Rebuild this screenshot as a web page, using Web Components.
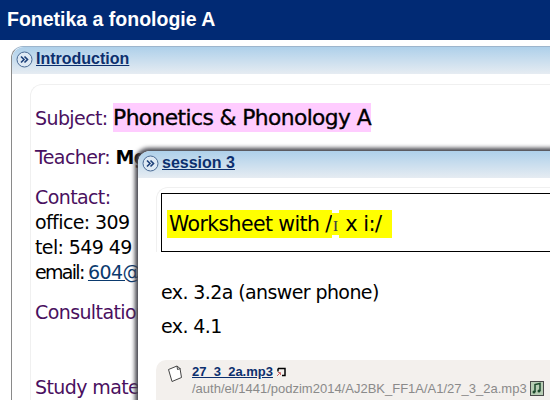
<!DOCTYPE html>
<html lang="en"><head><meta charset="utf-8"><title>Fonetika a fonologie A</title>
<style>
html,body{margin:0;padding:0;height:100%;overflow:hidden;background:#fff}
body{font-family:"Liberation Sans",Arial,sans-serif;width:550px;height:400px;position:relative}
</style></head><body>
<page-title>Fonetika a fonologie A</page-title>
<section-panel heading="Introduction" style="margin:6px 0 0 11px;width:700px;height:500px">
  <soft-box style="margin:10px 0 0 18px;padding:20px 0 0 4px">
    <comic-line mt="0"><purple-text>Subject:</purple-text> <hl-text color="#ffccff" size="21.800px" strong>Phonetics &amp; Phonology A</hl-text></comic-line>
    <comic-line mt="14"><purple-text>Teacher:</purple-text> <b>Mgr. </b></comic-line>
    <comic-line mt="15"><purple-text>Contact:</purple-text></comic-line>
    <comic-line mt="0">office: 309</comic-line>
    <comic-line mt="0">tel: 549 49</comic-line>
    <comic-line mt="0"><span style="letter-spacing:-1.700px">email: </span><a href="#" style="color:#0b3a6e">604@</a></comic-line>
    <comic-line mt="15"><purple-text>Consultation</purple-text></comic-line>
    <comic-line mt="50"><purple-text>Study mater</purple-text></comic-line>
  </soft-box>
</section-panel>
<float-window heading="session 3">
  <soft-box style="margin:9px 0 0 18px;padding:5px 0 0 4px">
    <bordered-box>
      <hl-text color="#ffff00" size="20.500px" pad="2px 0 2px 2px">Worksheet with /</hl-text><hl-text color="#ffff00" size="20px" serif pad="0 1px">ɪ</hl-text><hl-text color="#ffff00" size="21px" pad="2px 11px 2px 0"> x i:/</hl-text>
    </bordered-box>
  </soft-box>
  <comic-line mt="28" style="margin-left:23px">ex. 3.2a (answer phone)</comic-line>
  <comic-line mt="9" style="margin-left:23px">ex. 4.1</comic-line>
  <file-row name="27_3_2a.mp3" path="/auth/el/1441/podzim2014/AJ2BK_FF1A/A1/27_3_2a.mp3"></file-row>
</float-window>
<script>
function def(name, html, init){
  customElements.define(name, class extends HTMLElement{
    constructor(){super();this.attachShadow({mode:"open"}).innerHTML=typeof html==="function"?"":html;this._html=html;}
    connectedCallback(){ if(typeof this._html==="function") this.shadowRoot.innerHTML=this._html(this); if(init) init(this); }
  });
}
const icon=`<svg width="17" height="17" viewBox="0 0 17 17" style="flex:none"><circle cx="8.5" cy="8.5" r="7.5" fill="#dfeaf5" stroke="#4a6a94" stroke-width="1"/><path d="M5 5.500l3 3-3 3M8.500 5.500l3 3-3 3" fill="none" stroke="#1c3f78" stroke-width="1.600"/></svg>`;
const head=`.h{display:flex;align-items:center;gap:3px;box-sizing:border-box;height:27px;padding:0 0 3px 4px;background:linear-gradient(#aed0ea,#e6ecf2);border-radius:12px 0 0 0}
 a{font:bold 16px "Liberation Sans",Arial,sans-serif;color:#0c2f6e;text-decoration:underline}`;
def("page-title",`<style>:host{display:block;box-sizing:border-box;height:40px;background:#012a74;color:#fff;font:bold 19.500px/38px "Liberation Sans",Arial,sans-serif;padding-left:7px}</style><slot></slot>`);
const fill=el=>{const h=el.shadowRoot.querySelector(".h"); if(!h.firstChild) h.innerHTML=icon+`<a href="#">${el.getAttribute("heading")}</a>`;};
def("section-panel",`<style>:host{display:block;box-sizing:border-box;border-left:1px solid #8a8a8a;border-top:1px solid #9db5cc;border-radius:12px 0 0 0}${head}</style>
<div class="h"></div><slot></slot>`,fill);
def("float-window",`<style>:host{position:absolute;left:138px;top:151px;width:600px;height:400px;background:#fff;border-radius:12px 0 0 0;box-shadow:-1px -1px 4px 2px #44444c}${head}</style>
<div class="h"></div><slot></slot>`,fill);
def("soft-box",`<style>:host{display:block;border-left:1px solid #f0f0f0;border-top:1px solid #f0f0f0;border-radius:12px 0 0 0}</style><slot></slot>`);
def("comic-line",`<style>:host{display:block;font:19px/25px "DejaVu Sans",sans-serif;color:#000;letter-spacing:-.6px;white-space:nowrap}</style><slot></slot>`,el=>{
  el.style.marginTop=(el.getAttribute("mt")||0)+"px";
});
def("purple-text",`<style>:host{color:#4a1060}</style><slot></slot>`);
def("hl-text",`<style>:host{display:inline}span{font-family:"DejaVu Sans",sans-serif;color:#000;padding:2px 0;white-space:pre}</style><span><slot></slot></span>`,el=>{
  const s=el.shadowRoot.querySelector("span");
  s.style.background=el.getAttribute("color");
  s.style.fontSize=el.getAttribute("size");
  if(el.hasAttribute("pad")) s.style.padding=el.getAttribute("pad");
  if(el.hasAttribute("strong")) s.style.webkitTextStroke=".35px #000";
  if(el.hasAttribute("serif")){s.style.fontFamily='"Liberation Serif",serif';s.style.color="#444";s.style.letterSpacing="0";}
});
def("bordered-box",`<style>:host{display:block;box-sizing:border-box;height:59px;border:1px solid #000;border-right:0;padding:16px 0 0 5px;line-height:28px;letter-spacing:-.6px;white-space:nowrap}</style><slot></slot>`);
def("file-row",el=>`<style>:host{display:block;margin:21px 0 0 18px;background:#f3f0ed;border-radius:10px 0 0 0;height:60px}
 .r{display:flex;gap:9px;padding:3px 0 0 11px}
 .t{font:13px/15px "Liberation Sans",Arial,sans-serif;color:#8a8a8a;display:flex;flex-direction:column}
 a{font:bold 13px/17px "Liberation Sans",Arial,sans-serif;color:#0c2f6e}
 .n{display:flex;align-items:center;gap:3px}
 .p{display:flex;align-items:center;gap:3px;margin-top:1px}</style>
 <div class="r">
 <svg width="16" height="18" viewBox="0 0 16 18" style="flex:none;margin-top:2px"><path d="M1.500 4.500L10 1l3 2.500 1.500 9L5 16.500z" fill="#fff" stroke="#444"/><path d="M10 1l.5 3.500 3-1" fill="none" stroke="#444"/></svg>
 <div class="t"><div class="n"><a href="#">${el.getAttribute("name")}</a>
 <svg width="10" height="10" viewBox="0 0 10 10"><path d="M2 1.500h7v7H6M2 1.500v3" fill="none" stroke="#000" stroke-width="1.500"/><path d="M1 9l3-3M2 5.500h2.500V8" fill="none" stroke="#c66"/></svg></div>
 <div class="p"><span>${el.getAttribute("path")}</span>
 <svg width="14" height="15" viewBox="0 0 14 15"><rect x=".5" y=".5" width="13" height="14" fill="#b7cdb4" stroke="#4a4a4a"/><path d="M5 11V3.500l5-1V10" fill="none" stroke="#1d4a2c" stroke-width="1.500"/><circle cx="4" cy="11" r="1.500" fill="#1d4a2c"/><circle cx="9" cy="10" r="1.500" fill="#1d4a2c"/></svg></div></div></div>`);
</script>
</body></html>
